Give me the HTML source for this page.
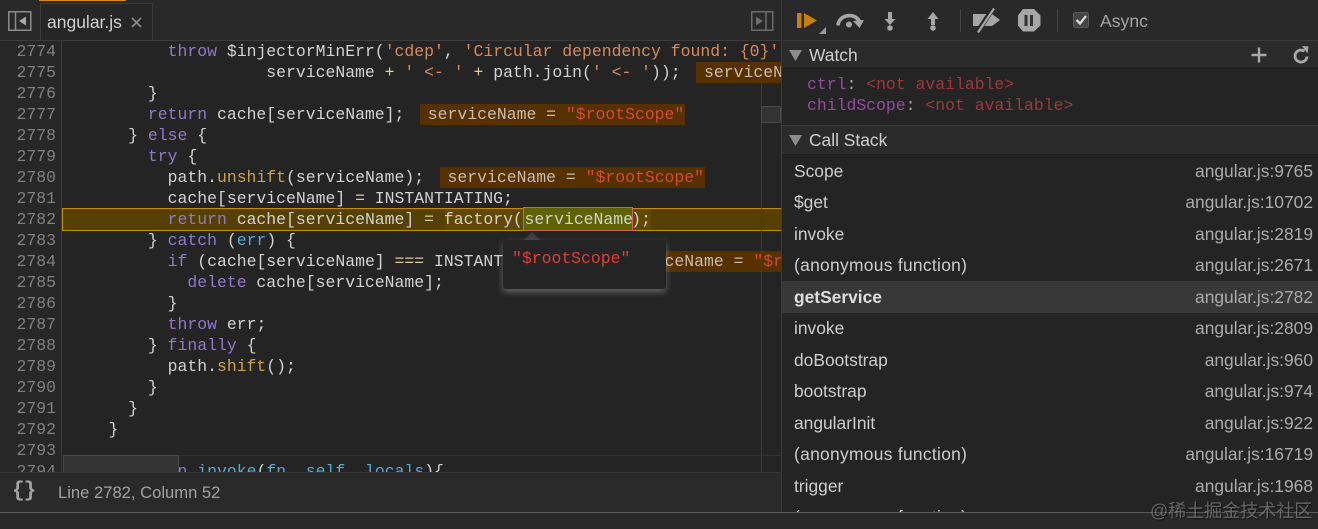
<!DOCTYPE html>
<html><head><meta charset="utf-8">
<style>
html,body{margin:0;padding:0;width:1318px;height:529px;overflow:hidden;background:#242424}
*{box-sizing:border-box}
.a{position:absolute}
#ed{left:0;top:41px;width:781px;height:431px;overflow:hidden;background:#242424;font:16.45px/21px "Liberation Mono",monospace;color:#d2d2d2}
#gut{left:0;top:0;width:62px;height:431px;background:#272727;border-right:1px solid #3d3d3d}
.n{position:absolute;left:0;width:56px;text-align:right;color:#808080;height:21px}
.l{position:absolute;left:69px;white-space:pre;height:21px;width:712px;overflow:visible}
.k{color:#9079c9}.s{color:#d98a5c}.f{color:#c9a24f}.v{color:#5aa8d0}.y{color:#d8cf90}
.i{display:inline-block;height:21px;background:#573000;margin-left:15.4px;padding-left:8px;padding-right:1px;color:#c8bcae}
.i b{font-weight:normal;color:#d24a3a}
.ui{font-family:"Liberation Sans",sans-serif;font-size:17.4px;white-space:pre}
.row{position:absolute;left:782px;width:536px;height:31.5px;line-height:31px;color:#cdcdcd}
.row span{position:absolute;left:12px}
.row i{position:absolute;right:5px;font-style:normal;color:#ababab}
</style></head><body>

<div class="a" style="left:0;top:0;width:1318px;height:41px;background:#292929"></div>
<div class="a" style="left:39px;top:0;width:87px;height:1px;background:#d98a00"></div>
<div class="a" style="left:40px;top:3px;width:113px;height:38px;background:#262626;border:1px solid #3a3a3a;border-bottom:none"></div>
<div class="a ui" style="left:47px;top:12px;color:#d0d0d0;line-height:21px;font-size:17.5px">angular.js</div>
<svg class="a" style="left:131px;top:17px" width="11" height="11"><path d="M1 1L10 10M10 1L1 10" stroke="#8c8c8c" stroke-width="1.6"/></svg>
<svg class="a" style="left:8px;top:11px" width="24" height="20"><rect x=".75" y=".75" width="22" height="18.5" fill="none" stroke="#8a8a8a" stroke-width="1.5"/><path d="M7.5 1V19" stroke="#8a8a8a" stroke-width="1.5"/><path d="M18 5.5V14.5L11 10Z" fill="#a8a8a8"/></svg>
<svg class="a" style="left:751px;top:11px" width="23" height="20"><rect x=".75" y=".75" width="21" height="18.5" fill="none" stroke="#6c6c6c" stroke-width="1.5"/><path d="M15 1V19" stroke="#6c6c6c" stroke-width="1.5"/><path d="M5 5.5V14.5L12 10Z" fill="#6c6c6c"/></svg>
<div class="a" style="left:0;top:40px;width:781px;height:1px;background:#3c3c3c"></div>

<div id="ed" class="a">
<div id="gut" class="a"></div>
<div class="n" style="top:0">2774</div><div class="n" style="top:21px">2775</div><div class="n" style="top:42px">2776</div><div class="n" style="top:63px">2777</div><div class="n" style="top:84px">2778</div><div class="n" style="top:105px">2779</div><div class="n" style="top:126px">2780</div><div class="n" style="top:147px">2781</div><div class="n" style="top:168px">2782</div><div class="n" style="top:189px">2783</div><div class="n" style="top:210px">2784</div><div class="n" style="top:231px">2785</div><div class="n" style="top:252px">2786</div><div class="n" style="top:273px">2787</div><div class="n" style="top:294px">2788</div><div class="n" style="top:315px">2789</div><div class="n" style="top:336px">2790</div><div class="n" style="top:357px">2791</div><div class="n" style="top:378px">2792</div><div class="n" style="top:399px">2793</div><div class="n" style="top:420px">2794</div>

<div class="a" style="left:62px;top:167px;width:719px;height:23px;background:#564000;border:1px solid #c58f00;border-right:none"></div>
<div class="a" style="left:445px;top:168px;width:206px;height:21px;background:#604800"></div>

<div class="l" style="top:0">          <span class="k">throw</span> $injectorMinErr(<span class="s">'cdep'</span>, <span class="s">'Circular dependency found: {0}'</span></div>
<div class="l" style="top:21px">                    serviceName <span class="y">+</span> <span class="s">' &lt;- '</span> <span class="y">+</span> path.join(<span class="s">' &lt;- '</span>));<span class="i">serviceName = <b>"$rootScope"</b></span></div>
<div class="l" style="top:42px">        }</div>
<div class="l" style="top:63px">        <span class="k">return</span> cache[serviceName];<span class="i">serviceName = <b>"$rootScope"</b></span></div>
<div class="l" style="top:84px">      } <span class="k">else</span> {</div>
<div class="l" style="top:105px">        <span class="k">try</span> {</div>
<div class="l" style="top:126px">          path.<span class="f">unshift</span>(serviceName);<span class="i">serviceName = <b>"$rootScope"</b></span></div>
<div class="l" style="top:147px">          cache[serviceName] <span class="y">=</span> INSTANTIATING;</div>
<div class="l" style="top:168px">          <span class="k">return</span> cache[serviceName] <span class="y">=</span> factory(serviceName);</div>
<div class="l" style="top:189px">        } <span class="k">catch</span> (<span class="v">err</span>) {</div>
<div class="l" style="top:210px">          <span class="k">if</span> (cache[serviceName] <span class="y">===</span> INSTANTIATING) {<span class="i">serviceName = <b>"$rootScope"</b></span></div>
<div class="l" style="top:231px">            <span class="k">delete</span> cache[serviceName];</div>
<div class="l" style="top:252px">          }</div>
<div class="l" style="top:273px">          <span class="k">throw</span> err;</div>
<div class="l" style="top:294px">        } <span class="k">finally</span> {</div>
<div class="l" style="top:315px">          path.<span class="f">shift</span>();</div>
<div class="l" style="top:336px">        }</div>
<div class="l" style="top:357px">      }</div>
<div class="l" style="top:378px">    }</div>
<div class="l" style="top:420px">    <span class="k">function</span> <span class="v">invoke</span>(<span class="v">fn</span>, <span class="v">self</span>, <span class="v">locals</span>){</div>

<div class="a" style="left:523px;top:166px;width:110px;height:24px;background:#5f6200;border:1px solid #d4605a;color:#d2d2d2;line-height:23px;padding-left:.5px">serviceName</div>

<div class="a" style="left:761px;top:42px;width:1px;height:389px;background:#3a3a3a"></div>
<div class="a" style="left:761px;top:65px;width:20px;height:17px;background:#333;border:1px solid #4a4a4a;border-radius:2px"></div>
<div class="a" style="left:62px;top:414px;width:719px;height:1px;background:#333"></div>
<div class="a" style="left:63px;top:414px;width:116px;height:17px;background:#333;border:1px solid #4a4a4a;border-bottom:none;border-radius:2px 2px 0 0"></div>

<svg class="a" style="left:522px;top:190px" width="20" height="10"><path d="M1 10L10 1L19 10Z" fill="#3d3d3d"/></svg>
<div class="a" style="left:503px;top:199px;width:163px;height:49px;background:#242424;border-radius:3px;box-shadow:0 3px 7px 0 rgba(255,255,255,.3);color:#e23c3c;padding:8px 0 0 9px;line-height:21px">"$rootScope"</div>
</div>

<div class="a" style="left:781px;top:0;width:1px;height:513px;background:#3c3c3c"></div>

<!-- status bar -->
<div class="a" style="left:0;top:472px;width:781px;height:40px;background:#2a2a2a;border-top:1px solid #363636"></div>
<div class="a" style="left:12px;top:480px;font:bold 21px/24px 'Liberation Mono',monospace;color:#a4a4a4;letter-spacing:-1px">{}</div>
<div class="a ui" style="left:58px;top:482px;line-height:21px;color:#a2a2a2;font-size:16.6px">Line 2782, Column 52</div>
<div class="a" style="left:0;top:512px;width:1318px;height:1px;background:#5a5a5a"></div>
<div class="a" style="left:0;top:513px;width:1318px;height:16px;background:#292929"></div>

<!-- sidebar toolbar -->
<svg class="a" style="left:782px;top:0" width="536" height="40">
<rect x="15" y="13" width="4.5" height="15" fill="#c7800f"/><path d="M22 13V28L35 20.5Z" fill="#c7800f"/>
<path d="M37 34H44V27Z" fill="#9a9a9a"/>
<path d="M56 25.5C56.5 14.5 73 12 77.5 21.5" fill="none" stroke="#a6a6a6" stroke-width="3.6"/><path d="M71 21L82 20L77.5 28Z" fill="#a6a6a6"/><circle cx="67" cy="24.5" r="3" fill="#a6a6a6"/>
<path d="M108 12V20" stroke="#a6a6a6" stroke-width="4"/><path d="M102.500 19H113.500L108 25Z" fill="#a6a6a6"/><circle cx="108" cy="28" r="2.800" fill="#a6a6a6"/>
<path d="M151 18V25" stroke="#a6a6a6" stroke-width="4"/><path d="M145.500 19H156.500L151 12Z" fill="#a6a6a6"/><circle cx="151" cy="28" r="2.800" fill="#a6a6a6"/>
<rect x="178" y="9" width="1" height="23" fill="#444"/>
<path d="M191 14H210L218 20L210 26H191Z" fill="#a6a6a6"/><path d="M211 8.500L195 32.500" stroke="#292929" stroke-width="5"/><path d="M212 8.500L196 32.500" stroke="#a6a6a6" stroke-width="2.200"/>
<path d="M241 9H252L258.500 15.500V25.500L252 31.500H241L236 25.500V15.500Z" fill="#a6a6a6"/><rect x="242.500" y="15" width="3" height="11" fill="#333"/><rect x="248" y="15" width="3" height="11" fill="#333"/>
<rect x="275" y="9" width="1" height="23" fill="#444"/>
<rect x="291.500" y="12.500" width="15" height="15" rx="2" fill="#444" stroke="#5c5c5c"/><path d="M294.500 20L298 23.500L304 16" fill="none" stroke="#d8d8d8" stroke-width="2.300"/>
</svg>
<div class="a ui" style="left:1100px;top:11px;line-height:21px;color:#a3a3a3;font-size:17.6px">Async</div>
<div class="a" style="left:782px;top:40px;width:536px;height:1px;background:#3c3c3c"></div>

<!-- Watch -->
<div class="a" style="left:782px;top:41px;width:536px;height:28px;background:#2b2b2b;border-bottom:1px solid #1e1e1e"></div>
<svg class="a" style="left:789px;top:49px" width="14" height="13"><path d="M0 1H13L6.500 12Z" fill="#8c8c8c"/></svg>
<div class="a ui" style="left:809px;top:45px;line-height:21px;color:#cfcfcf">Watch</div>
<svg class="a" style="left:1250px;top:46px" width="18" height="18"><path d="M9 1.500V16.500M1.500 9H16.500" stroke="#a8a8a8" stroke-width="2.400"/></svg>
<svg class="a" style="left:1292px;top:45px" width="18" height="19"><path d="M12.500 6.200A6 6 0 1 0 15 11.500" fill="none" stroke="#a8a8a8" stroke-width="2.800"/><path d="M10 1L16.500 1.500L15.500 8.500Z" fill="#a8a8a8"/></svg>
<div class="a" style="left:807px;top:74px;font:16.45px/21px 'Liberation Mono',monospace;white-space:pre"><span style="color:#964a9e">ctrl</span><span style="color:#a8a8a8">: </span><span style="color:#9a3a3a">&lt;not available&gt;</span></div>
<div class="a" style="left:807px;top:95px;font:16.45px/21px 'Liberation Mono',monospace;white-space:pre"><span style="color:#964a9e">childScope</span><span style="color:#a8a8a8">: </span><span style="color:#9a3a3a">&lt;not available&gt;</span></div>

<!-- Call stack -->
<div class="a" style="left:782px;top:125px;width:536px;height:30px;background:#2b2b2b;border-top:1px solid #3a3a3a;border-bottom:1px solid #1e1e1e"></div>
<svg class="a" style="left:789px;top:134px" width="14" height="13"><path d="M0 1H13L6.500 12Z" fill="#8c8c8c"/></svg>
<div class="a ui" style="left:809px;top:130px;line-height:21px;color:#cfcfcf">Call Stack</div>

<div class="a" style="left:782px;top:281px;width:536px;height:31.5px;background:#383838"></div>
<div class="row ui" style="top:156px"><span>Scope</span><i>angular.js:9765</i></div>
<div class="row ui" style="top:187px"><span>$get</span><i>angular.js:10702</i></div>
<div class="row ui" style="top:219px"><span>invoke</span><i>angular.js:2819</i></div>
<div class="row ui" style="top:250px"><span style="letter-spacing:.3px">(anonymous function)</span><i>angular.js:2671</i></div>
<div class="row ui" style="top:282px"><span style="font-weight:bold;color:#dedede">getService</span><i>angular.js:2782</i></div>
<div class="row ui" style="top:313px"><span>invoke</span><i>angular.js:2809</i></div>
<div class="row ui" style="top:345px"><span>doBootstrap</span><i>angular.js:960</i></div>
<div class="row ui" style="top:376px"><span>bootstrap</span><i>angular.js:974</i></div>
<div class="row ui" style="top:408px"><span>angularInit</span><i>angular.js:922</i></div>
<div class="row ui" style="top:439px"><span style="letter-spacing:.3px">(anonymous function)</span><i>angular.js:16719</i></div>
<div class="row ui" style="top:471px"><span>trigger</span><i>angular.js:1968</i></div>
<div class="a" style="left:782px;top:502px;width:536px;height:10px;overflow:hidden"><div class="row ui" style="left:0;top:0"><span style="letter-spacing:.3px">(anonymous function)</span></div></div>

<div class="a" style="left:1150px;top:499px;font:18px/24px 'Liberation Sans','Noto Sans CJK SC',sans-serif;color:rgba(150,150,150,.6);white-space:pre;text-shadow:1px 1px 1px rgba(0,0,0,.5)">@稀土掘金技术社区</div>
</body></html>
